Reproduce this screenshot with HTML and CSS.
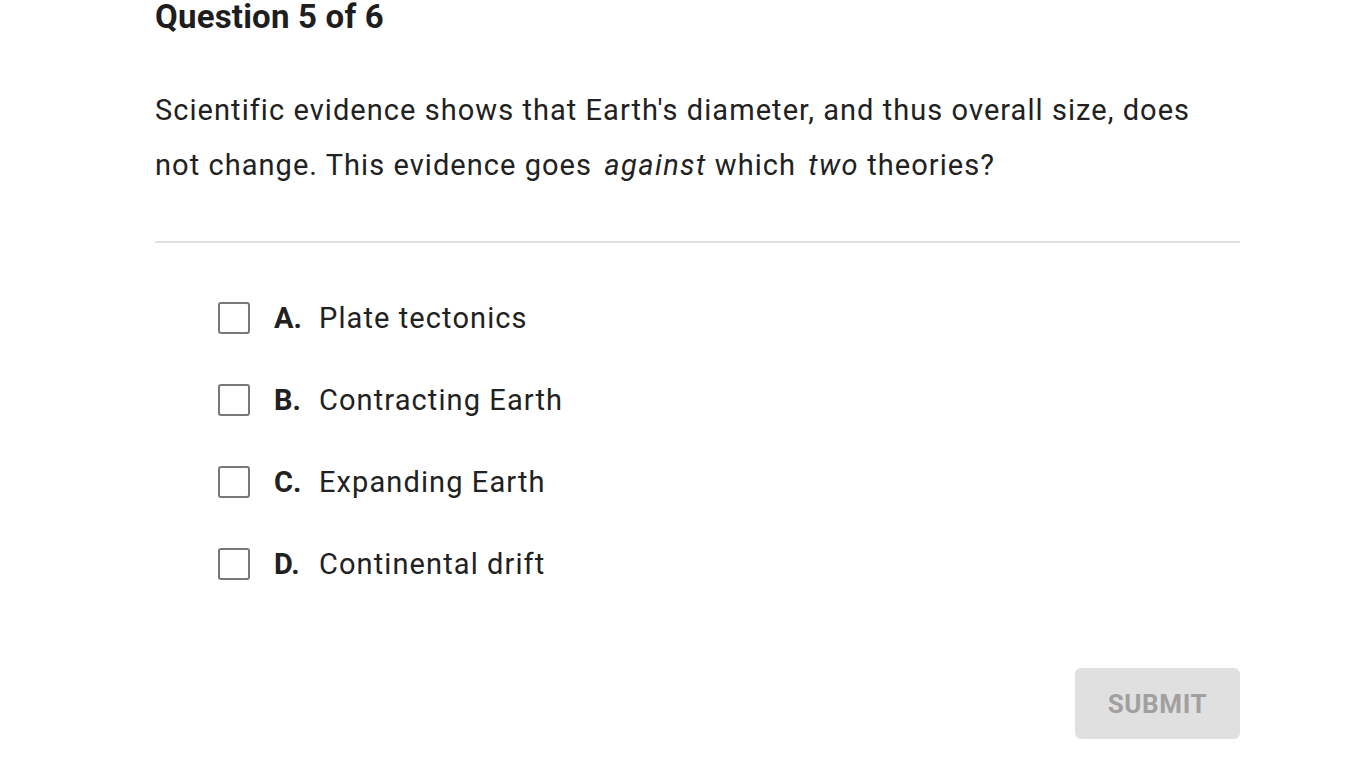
FILE: index.html
```html
<!DOCTYPE html>
<html>
<head>
<meta charset="utf-8">
<link rel="stylesheet" href="styles.css">
</head>
<body>
<main class="page">
  <h1 class="title">Question 5 of 6</h1>
  <p class="question">Scientific evidence shows that Earth's diameter, and thus overall size, does not change. This evidence goes <em class="em-first">against</em> which <em>two</em> theories?</p>
  <hr class="divider">
  <ul class="options">
    <li class="option"><span class="box"></span><span class="letter">A.</span><span class="text">Plate tectonics</span></li>
    <li class="option"><span class="box"></span><span class="letter">B.</span><span class="text">Contracting Earth</span></li>
    <li class="option"><span class="box"></span><span class="letter">C.</span><span class="text">Expanding Earth</span></li>
    <li class="option"><span class="box"></span><span class="letter">D.</span><span class="text">Continental drift</span></li>
  </ul>
  <div class="actions"><button class="submit">SUBMIT</button></div>
</main>
</body>
</html>
```
FILE: styles.css
```css
html, body {
  margin: 0;
  padding: 0;
  background: #fff;
}
body {
  font-family: Roboto, "Liberation Sans", sans-serif;
  color: #212121;
}
.page {
  width: 1085px;
  margin-left: 155px;
}
.title {
  margin: 0;
  font-size: 33px;
  font-weight: 700;
  letter-spacing: 0.2px;
  line-height: 34px;
  color: #1e1e1e;
}
.question {
  margin: 49px 0 0 0;
  font-size: 29px;
  letter-spacing: 1.05px;
  line-height: 55px;
  color: #212121;
}
.question em {
  font-style: italic;
  letter-spacing: 1.4px;
  margin-left: 4px;
}
.divider {
  margin: 48px 0 0 0;
  border: 0;
  height: 2px;
  background: #e0e0e0;
}
.options {
  list-style: none;
  margin: 59px 0 0 63px;
  padding: 0;
  display: flex;
  flex-direction: column;
  gap: 50px;
}
.option {
  display: flex;
  align-items: center;
  height: 32px;
}
.box {
  width: 28px;
  height: 28px;
  border: 2px solid #787878;
  border-radius: 3px;
  flex: none;
}
.letter {
  margin-left: 24px;
  font-size: 29px;
  font-weight: 700;
  width: 45px;
  flex: none;
}
.text {
  font-size: 29px;
  letter-spacing: 1.1px;
}
.actions {
  display: flex;
  justify-content: flex-end;
  margin-top: 88px;
}
.submit {
  width: 165px;
  height: 71px;
  border: 0;
  border-radius: 6px;
  background: #e0e0e0;
  color: #a0a0a0;
  font-family: Roboto, "Liberation Sans", sans-serif;
  font-size: 26px;
  font-weight: 700;
  letter-spacing: 0.6px;
  padding: 0;
}
```
